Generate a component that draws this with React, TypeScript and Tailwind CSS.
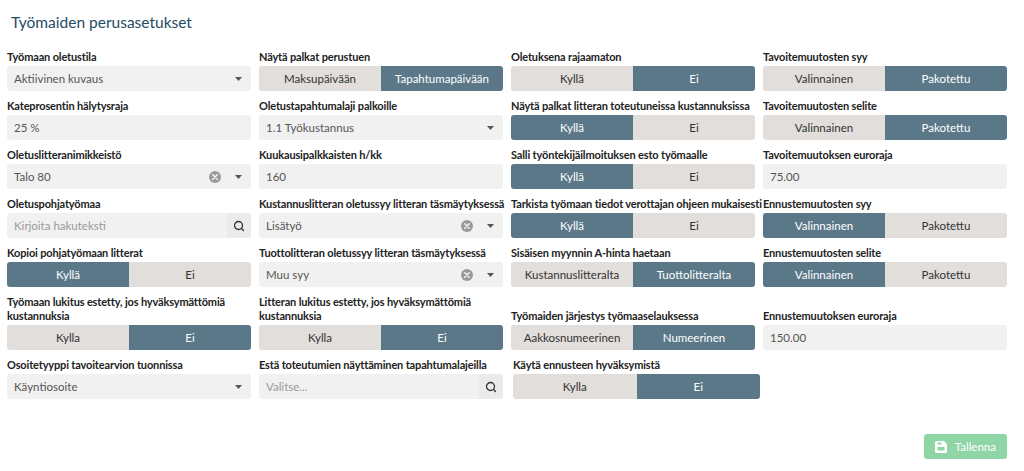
import { Search } from 'lucide-react';

type Field =
  | { kind: 'toggle'; label: string; options: [string, string]; selected: 0 | 1; shift?: boolean }
  | { kind: 'select'; label: string; value: string; clearable?: boolean }
  | { kind: 'input'; label: string; value: string }
  | { kind: 'search'; label: string; placeholder: string }
  | { kind: 'empty' };

const columns: Field[][] = [
  [
    { kind: 'select', label: 'Työmaan oletustila', value: 'Aktiivinen kuvaus' },
    { kind: 'input', label: 'Kateprosentin hälytysraja', value: '25 %' },
    { kind: 'select', label: 'Oletuslitteranimikkeistö', value: 'Talo 80', clearable: true },
    { kind: 'search', label: 'Oletuspohjatyömaa', placeholder: 'Kirjoita hakuteksti' },
    { kind: 'toggle', label: 'Kopioi pohjatyömaan litterat', options: ['Kyllä', 'Ei'], selected: 0 },
    { kind: 'toggle', label: 'Työmaan lukitus estetty, jos hyväksymättömiä\nkustannuksia', options: ['Kylla', 'Ei'], selected: 1 },
    { kind: 'select', label: 'Osoitetyyppi tavoitearvion tuonnissa', value: 'Käyntiosoite' },
  ],
  [
    { kind: 'toggle', label: 'Näytä palkat perustuen', options: ['Maksupäivään', 'Tapahtumapäivään'], selected: 1 },
    { kind: 'select', label: 'Oletustapahtumalaji palkoille', value: '1.1 Työkustannus' },
    { kind: 'input', label: 'Kuukausipalkkaisten h/kk', value: '160' },
    { kind: 'select', label: 'Kustannuslitteran oletussyy litteran täsmäytyksessä', value: 'Lisätyö', clearable: true },
    { kind: 'select', label: 'Tuottolitteran oletussyy litteran täsmäytyksessä', value: 'Muu syy', clearable: true },
    { kind: 'toggle', label: 'Litteran lukitus estetty, jos hyväksymättömiä\nkustannuksia', options: ['Kylla', 'Ei'], selected: 1 },
    { kind: 'search', label: 'Estä toteutumien näyttäminen tapahtumalajeilla', placeholder: 'Valitse...' },
  ],
  [
    { kind: 'toggle', label: 'Oletuksena rajaamaton', options: ['Kyllä', 'Ei'], selected: 1 },
    { kind: 'toggle', label: 'Näytä palkat litteran toteutuneissa kustannuksissa', options: ['Kyllä', 'Ei'], selected: 0 },
    { kind: 'toggle', label: 'Salli työntekijäilmoituksen esto työmaalle', options: ['Kyllä', 'Ei'], selected: 0 },
    { kind: 'toggle', label: 'Tarkista työmaan tiedot verottajan ohjeen mukaisesti', options: ['Kyllä', 'Ei'], selected: 0 },
    { kind: 'toggle', label: 'Sisäisen myynnin A-hinta haetaan', options: ['Kustannuslitteralta', 'Tuottolitteralta'], selected: 1 },
    { kind: 'toggle', label: 'Työmaiden järjestys työmaaselauksessa', options: ['Aakkosnumeerinen', 'Numeerinen'], selected: 1 },
    { kind: 'toggle', label: 'Käytä ennusteen hyväksymistä', options: ['Kylla', 'Ei'], selected: 1, shift: true },
  ],
  [
    { kind: 'toggle', label: 'Tavoitemuutosten syy', options: ['Valinnainen', 'Pakotettu'], selected: 1 },
    { kind: 'toggle', label: 'Tavoitemuutosten selite', options: ['Valinnainen', 'Pakotettu'], selected: 1 },
    { kind: 'input', label: 'Tavoitemuutoksen euroraja', value: '75.00' },
    { kind: 'toggle', label: 'Ennustemuutosten syy', options: ['Valinnainen', 'Pakotettu'], selected: 0 },
    { kind: 'toggle', label: 'Ennustemuutosten selite', options: ['Valinnainen', 'Pakotettu'], selected: 0 },
    { kind: 'input', label: 'Ennustemuutoksen euroraja', value: '150.00' },
    { kind: 'empty' },
  ],
];

function Caret() {
  return (
    <svg width="7" height="4" viewBox="0 0 7 4" className="shrink-0">
      <path d="M0 0h7L3.5 4z" fill="#555" />
    </svg>
  );
}

function ClearIcon() {
  return (
    <svg width="12" height="12" viewBox="0 0 12 12" className="shrink-0">
      <circle cx="6" cy="6" r="6" fill="#9a9a9a" />
      <path d="M3.8 3.8l4.4 4.4M8.2 3.8l-4.4 4.4" stroke="#f1f1f1" strokeWidth="1.6" strokeLinecap="round" />
    </svg>
  );
}

function SaveIcon() {
  return (
    <svg width="12" height="12" viewBox="0 0 12 12">
      <path d="M1.5 0h7.5l3 3v7.5A1.5 1.5 0 0 1 10.5 12h-9A1.5 1.5 0 0 1 0 10.5v-9A1.5 1.5 0 0 1 1.5 0z" fill="#fff" />
      <rect x="2.5" y="6" width="7" height="3.5" fill="#8fd5a6" />
      <rect x="2.5" y="1.5" width="4" height="2" fill="#8fd5a6" />
    </svg>
  );
}

function Control({ f }: { f: Field }) {
  if (f.kind === 'empty') return null;
  if (f.kind === 'toggle') {
    return (
      <div className={`flex h-[25px] rounded-[3px] overflow-hidden ${f.shift ? 'ml-[2px] -mr-[5px]' : ''}`}>
        {f.options.map((o, i) => (
          <div
            key={o}
            className={`flex-1 flex items-center justify-center text-[11.5px] ${
              f.selected === i ? 'bg-[#5b7888] text-white' : 'bg-[#e2dedb] text-[#333]'
            }`}>
            {o}
          </div>
        ))}
      </div>
    );
  }
  if (f.kind === 'input') {
    return (
      <div className="flex items-center h-[25px] rounded-[3px] bg-[#f1f1f1] px-[7px] text-[11.5px] text-[#555]">
        {f.value}
      </div>
    );
  }
  if (f.kind === 'search') {
    return (
      <div className="flex items-center h-[25px] rounded-[3px] bg-[#f1f1f1] text-[11.5px] overflow-hidden">
        <span className="flex-1 pl-[7px] text-[#9a9a9a]">{f.placeholder}</span>
        <span className="flex items-center justify-center w-[24px] h-full bg-[#ebebeb]">
          <Search size={12} strokeWidth={2.6} color="#333" />
        </span>
      </div>
    );
  }
  return (
    <div className="flex items-center h-[25px] rounded-[3px] bg-[#f1f1f1] pl-[7px] pr-[9px] text-[11.5px] text-[#555]">
      <span className="flex-1">{f.value}</span>
      {f.clearable && (
        <span className="mr-[14px] flex">
          <ClearIcon />
        </span>
      )}
      <Caret />
    </div>
  );
}

export default function App() {
  const rows = [0, 1, 2, 3, 4, 5, 6];
  return (
    <div className="w-[1024px] h-[471px] bg-white pl-[7px] pr-[9px] font-['Lato',sans-serif] text-[#222]">
      <h1 className="pl-[4px] pt-[11px] h-[50px] text-[15.5px] text-[#1f4b63]">Työmaiden perusasetukset</h1>
      <div className="grid grid-cols-4 gap-y-2">
        {rows.map((r) =>
          columns.map((col, c) => {
            const f = col[r];
            return (
              <div key={`${r}-${c}`} className="flex flex-col justify-end pr-[8px]">
                {f.kind !== 'empty' && (
                  <div
                    className={`text-[11px] font-bold leading-[14px] mb-[2px] whitespace-pre tracking-[-0.15px] ${
                      f.kind === 'toggle' && f.shift ? 'pl-[2px]' : ''
                    }`}>
                    {f.label}
                  </div>
                )}
                <Control f={f} />
              </div>
            );
          })
        )}
      </div>
      <div className="flex justify-end pr-[8px] mt-[35px]">
        <button
          type="button"
          className="flex items-center gap-[8px] h-[25px] px-[11px] rounded-[3px] bg-[#8fd5a6] text-white text-[11.5px]">
          <SaveIcon />
          Tallenna
        </button>
      </div>
    </div>
  );
}
